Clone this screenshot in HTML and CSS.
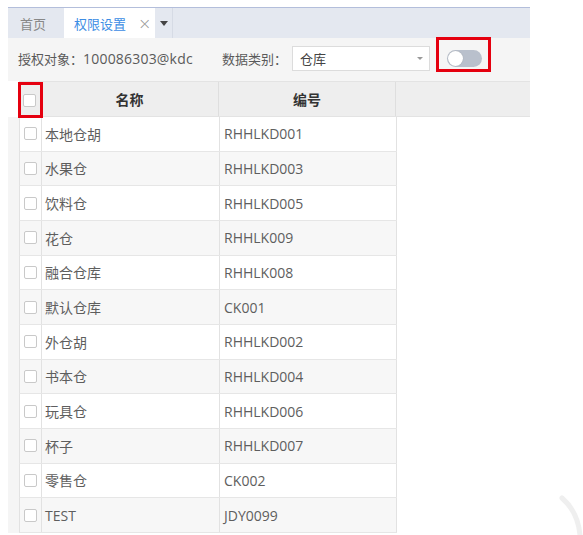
FILE: index.html
```html
<!DOCTYPE html>
<html>
<head>
<meta charset="utf-8">
<link rel="stylesheet" href="styles.css">
</head>
<body>
<div class="page">
  <div class="tabbar">
    <div class="tab">首页</div>
    <div class="tab active"><span>权限设置</span><span class="close">×</span></div>
    <div class="tab more"><span class="tri"></span></div>
  </div>
  <div class="toolbar">
    <span class="label obj">授权对象：<span class="num">100086303@kdc</span></span>
    <span class="label cat">数据类别：</span>
    <div class="select"><span>仓库</span><span class="arrow"></span></div>
    <div class="mark"><span class="toggle"><span class="knob"></span></span></div>
  </div>
  <div class="thead">
    <div class="th chk"><span class="cb"></span><span class="mark-abs"></span></div>
    <div class="th name">名称</div>
    <div class="th code">编号</div>
    <div class="th rest"></div>
  </div>
  <div class="tbody-wrap">
    <div class="tbody">
      <div class="row"><div class="td chk"><span class="cb"></span></div><div class="td name">本地仓胡</div><div class="td code">RHHLKD001</div></div>
      <div class="row"><div class="td chk"><span class="cb"></span></div><div class="td name">水果仓</div><div class="td code">RHHLKD003</div></div>
      <div class="row"><div class="td chk"><span class="cb"></span></div><div class="td name">饮料仓</div><div class="td code">RHHLKD005</div></div>
      <div class="row"><div class="td chk"><span class="cb"></span></div><div class="td name">花仓</div><div class="td code">RHHLK009</div></div>
      <div class="row"><div class="td chk"><span class="cb"></span></div><div class="td name">融合仓库</div><div class="td code">RHHLK008</div></div>
      <div class="row"><div class="td chk"><span class="cb"></span></div><div class="td name">默认仓库</div><div class="td code">CK001</div></div>
      <div class="row"><div class="td chk"><span class="cb"></span></div><div class="td name">外仓胡</div><div class="td code">RHHLKD002</div></div>
      <div class="row"><div class="td chk"><span class="cb"></span></div><div class="td name">书本仓</div><div class="td code">RHHLKD004</div></div>
      <div class="row"><div class="td chk"><span class="cb"></span></div><div class="td name">玩具仓</div><div class="td code">RHHLKD006</div></div>
      <div class="row"><div class="td chk"><span class="cb"></span></div><div class="td name">杯子</div><div class="td code">RHHLKD007</div></div>
      <div class="row"><div class="td chk"><span class="cb"></span></div><div class="td name">零售仓</div><div class="td code">CK002</div></div>
      <div class="row"><div class="td chk"><span class="cb"></span></div><div class="td name">TEST</div><div class="td code">JDY0099</div></div>
    </div>
  </div>
</div>
<svg class="watermark" width="583" height="535" viewBox="0 0 583 535"><path d="M562 498 Q578 512 580 535" fill="none" stroke="#efefef" stroke-width="5" stroke-linecap="round"/></svg>
</body>
</html>
```
FILE: styles.css
```css
html, body {
  margin: 0;
  padding: 0;
  background: #fff;
  overflow: hidden;
}
body {
  font-family: "Open Sans", "Noto Sans CJK SC", sans-serif;
  color: #555;
  position: relative;
  width: 583px;
  height: 535px;
}
.page {
  padding: 7px 0 0 8px;
  width: 522px;
}
.tabbar {
  display: flex;
  height: 30px;
  border-top: 1px solid #b3bedb;
  background: #e4e8f0;
}
.tab {
  display: flex;
  align-items: center;
  font-size: 13px;
  color: #888;
  padding-left: 12px;
  width: 44px;
}
.tab.active {
  background: #fff;
  color: #3d8de4;
  padding-left: 10px;
  width: 81px;
}
.close {
  margin-left: 12px;
  font-size: 16px;
  color: #999;
  font-family: "DejaVu Sans", sans-serif;
  font-weight: 300;
}
.tab.more {
  width: 17px;
  padding: 0;
  justify-content: center;
  border-right: 1px solid #d6dbe5;
}
.tri {
  width: 0;
  height: 0;
  border-left: 4px solid transparent;
  border-right: 4px solid transparent;
  border-top: 5px solid #444;
}
.toolbar {
  display: flex;
  align-items: flex-start;
  height: 43px;
  background: #f5f5f5;
}
.label {
  font-size: 13px;
  color: #5a5a5a;
  line-height: 18px;
  margin-top: 12px;
}
.num {
  font-size: 14px;
  letter-spacing: 0.2px;
}
.obj {
  margin-left: 10px;
  width: 204px;
}
.cat {
  width: 70px;
}
.select {
  box-sizing: border-box;
  width: 138px;
  height: 25px;
  margin-top: 8px;
  background: #fff;
  border: 1px solid #dcdcdc;
  display: flex;
  align-items: center;
  justify-content: space-between;
  padding: 0 6px 0 7px;
  font-size: 13px;
  color: #444;
}
.arrow {
  width: 0;
  height: 0;
  border-left: 3px solid transparent;
  border-right: 3px solid transparent;
  border-top: 3px solid #999;
}
.mark {
  margin-left: 6px;
  margin-top: -1px;
  border: 3px solid #e5000f;
  padding: 10px 6px 2px 8px;
  display: flex;
}
.toggle {
  position: relative;
  display: block;
  width: 35px;
  height: 17px;
  border-radius: 9px;
  background: #b9c0cc;
}
.knob {
  position: absolute;
  left: 1px;
  top: 1px;
  width: 15px;
  height: 15px;
  border-radius: 50%;
  background: #fff;
  box-shadow: 0 0 1px rgba(0,0,0,0.25);
}
.thead {
  display: flex;
  margin-left: 11px;
  height: 34px;
  border-top: 1px solid #e3e3e3;
  border-bottom: 1px solid #e3e3e3;
  background: #eeeeee;
}
.th {
  box-sizing: border-box;
  display: flex;
  align-items: center;
  justify-content: center;
  font-size: 14px;
  font-weight: bold;
  color: #333;
  border-right: 1px solid #dedede;
}
.th.chk {
  width: 22px;
  position: relative;
}
.th.name { width: 178px; }
.th.code { width: 177px; }
.th.rest { width: 134px; border-right: none; }
.mark-abs {
  position: absolute;
  left: -1px;
  top: 0;
  width: 25px;
  height: 36px;
  box-sizing: border-box;
  border: 3px solid #e5000f;
}
.cb {
  display: block;
  box-sizing: border-box;
  width: 13px;
  height: 13px;
  border: 1px solid #c9c9c9;
  border-radius: 2px;
  background: #fff;
}
.th .cb {
  margin-top: 2px;
}
.tbody-wrap {
  width: 377px;
  padding-left: 11px;
  background: #f5f5f5;
}
.tbody {
  background: #fff;
}
.row {
  display: flex;
  box-sizing: border-box;
  height: 34.67px;
  width: 378px;
  border-left: 1px solid #e2e2e2;
  border-bottom: 1px solid #e6e6e6;
  background: #fff;
}
.row:nth-child(even) {
  background: #f7f7f7;
}
.td {
  box-sizing: border-box;
  display: flex;
  align-items: center;
  font-size: 14px;
  color: #5e5e5e;
  border-right: 1px solid #e2e2e2;
}
.td.chk {
  width: 22px;
  justify-content: center;
}
.td.name {
  width: 178px;
  padding-left: 3px;
}
.td.code {
  width: 177px;
  padding-left: 4px;
}
.watermark {
  position: absolute;
  left: 0;
  top: 0;
  pointer-events: none;
}
```
